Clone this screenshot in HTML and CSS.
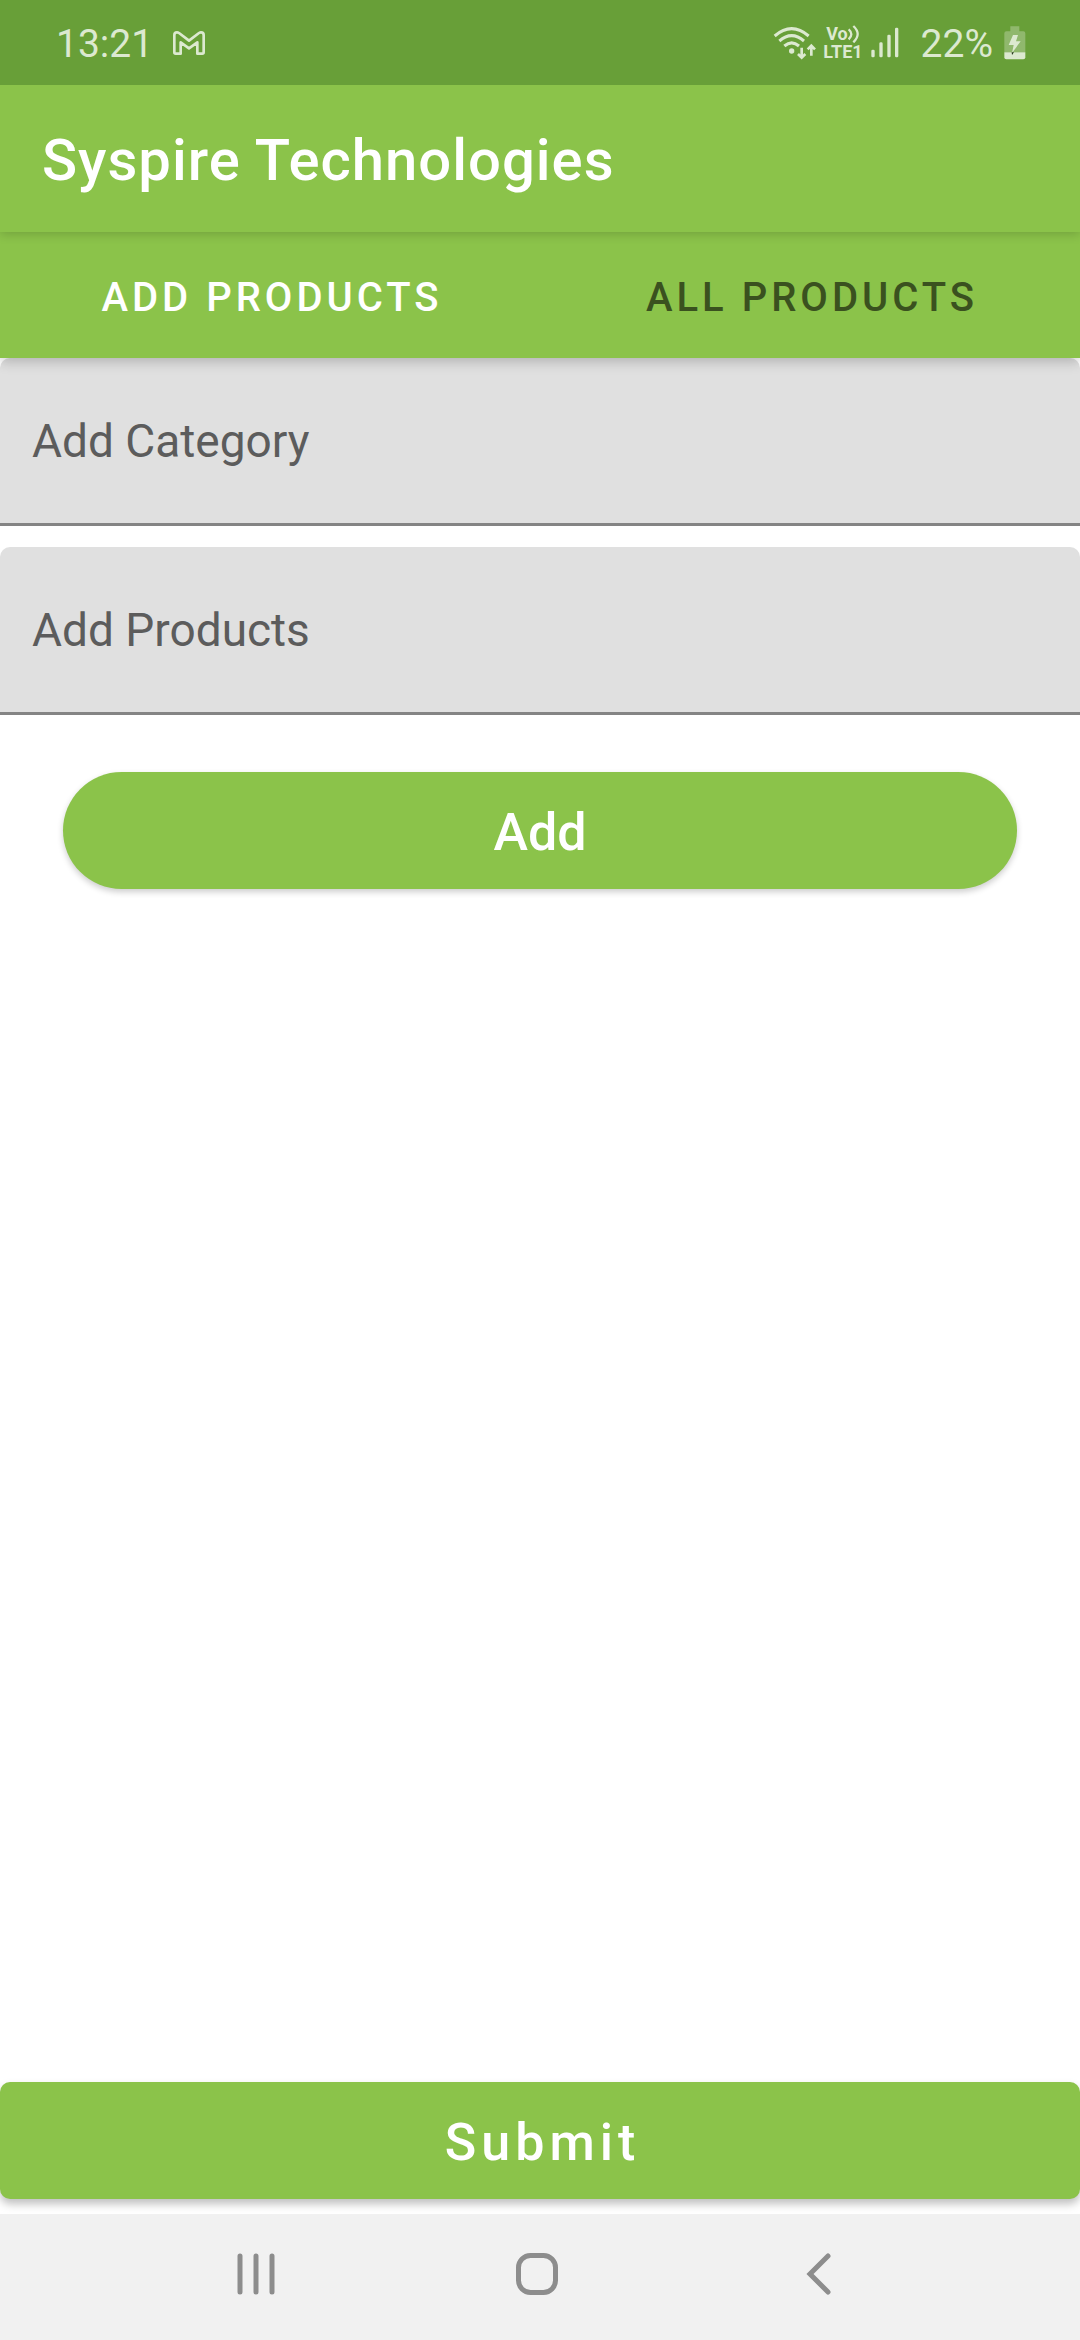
FILE: index.html
```html
<!DOCTYPE html>
<html lang="en">
<head>
<meta charset="utf-8">
<meta name="viewport" content="width=device-width, initial-scale=1">
<title>Syspire Technologies</title>
<link rel="stylesheet" href="styles.css">
</head>
<body>
<div class="app">
  <div class="status">
    <span class="clock">13:21</span>
    <svg class="mail" width="32" height="24" viewBox="0 0 96 72" aria-hidden="true">
      <path d="M4 64V12Q4 4 12 4Q15 4 18 6L48 29L78 6Q81 4 84 4Q92 4 92 12V64Q92 68 88 68H73V34L48 52L23 34V68H8Q4 68 4 64Z" fill="none" stroke="currentColor" stroke-width="8" stroke-linejoin="round"/>
    </svg>
    <div class="indicators">
      <svg width="44" height="34" viewBox="38 76 132 102" aria-hidden="true">
        <g fill="none" stroke="currentColor" stroke-width="9">
          <path d="M43 106Q94 62 145 106"/>
          <path d="M57 121Q94 89 131 121"/>
          <path d="M72 136Q94 117 116 136"/>
          <path d="M124 141V170M113 160L124 171L135 160" stroke-width="8"/>
          <path d="M153 165V136M142 146L153 135L164 146" stroke-width="8"/>
        </g>
        <circle cx="94" cy="151" r="8" fill="currentColor"/>
      </svg>
      <div class="volte">
        <span class="vo">Vo<svg width="12" height="18" viewBox="0 0 36 54" aria-hidden="true"><g fill="none" stroke="currentColor" stroke-width="7"><path d="M2 13Q18 27 2 43"/><path d="M16 3Q42 27 16 52"/></g></svg></span>
        <span>LTE1</span>
      </div>
      <svg class="signal" width="28" height="32" viewBox="332 84 84 96" aria-hidden="true">
        <g fill="currentColor"><rect x="333" y="152" width="10" height="23" rx="4"/><rect x="357" y="130" width="10" height="45" rx="4"/><rect x="381" y="107" width="10" height="68" rx="4"/><rect x="404" y="86" width="10" height="89" rx="4"/></g>
      </svg>
      <span class="percent">22%</span>
      <svg width="22" height="34" viewBox="731 77 66 102" aria-hidden="true">
        <path d="M750 78H777V93H789Q795 93 795 99V156H732V99Q732 93 738 93H750Z" fill="currentColor" opacity=".35"/>
        <path d="M732 156H795V171Q795 177 789 177H738Q732 177 732 171Z" fill="currentColor"/>
        <path d="M758 104H773L767 123H781L755 158L760 134H745Z" fill="currentColor"/>
        <path d="M754 156H761L755 164Z" fill="#23351a"/>
      </svg>
    </div>
  </div>
  <header class="bar"><h1>Syspire Technologies</h1></header>
  <nav class="tabs">
    <button class="tab active" type="button">ADD PRODUCTS</button>
    <button class="tab" type="button">ALL PRODUCTS</button>
  </nav>
  <form class="form">
    <input class="field" type="text" placeholder="Add Category" aria-label="Add Category">
    <input class="field" type="text" placeholder="Add Products" aria-label="Add Products">
    <button class="btn add" type="button">Add</button>
    <button class="btn submit" type="submit">Submit</button>
  </form>
  <nav class="system">
    <button type="button" aria-label="Recent apps"><svg width="42" height="42" viewBox="0 0 42 42"><path d="M5 3V39M21 3V39M37 3V39" fill="none" stroke="currentColor" stroke-width="5" stroke-linecap="round"/></svg></button>
    <button type="button" aria-label="Home"><svg width="42" height="42" viewBox="0 0 42 42"><rect x="2.5" y="2.5" width="37" height="37" rx="12" fill="none" stroke="currentColor" stroke-width="5"/></svg></button>
    <button type="button" aria-label="Back"><svg width="42" height="42" viewBox="0 0 42 42"><path d="M31 3L13 21L31 39" fill="none" stroke="currentColor" stroke-width="5" stroke-linecap="round"/></svg></button>
  </nav>
</div>
</body>
</html>
```
FILE: styles.css
```css
* {
  box-sizing: border-box;
}

body {
  margin: 0;
  background: #fff;
  font-family: Roboto, "Liberation Sans", sans-serif;
}

button,
input {
  margin: 0;
  border: 0;
  font-family: inherit;
}

button {
  padding: 0;
  background: none;
}

svg {
  display: block;
  flex: none;
}

.app {
  display: flex;
  flex-direction: column;
  min-height: 100vh;
}

.status {
  display: flex;
  align-items: center;
  height: 85px;
  padding: 0 54px 0 56px;
  background: #689f38;
  color: #dce9d0;
  font-size: 39px;
}

.clock,
.percent {
  padding-top: 3px;
}

.mail {
  margin-left: 20px;
}

.indicators {
  display: flex;
  align-items: center;
  margin-left: auto;
}

.volte {
  display: flex;
  flex-direction: column;
  align-items: center;
  margin: 0 8px 0 6px;
  font-size: 18px;
  font-weight: 700;
  line-height: 18px;
}

.vo {
  display: flex;
}

.percent {
  margin: 0 11px 0 22px;
}

.bar {
  position: relative;
  z-index: 2;
  display: flex;
  align-items: center;
  height: 147px;
  padding: 3px 42px 0;
  background: #8bc34a;
  box-shadow: 0 2px 10px rgba(0, 0, 0, 0.18);
  clip-path: inset(0 0 -20px 0);
}

.bar h1 {
  margin: 0;
  color: #fff;
  font-size: 58px;
  font-weight: 500;
  letter-spacing: 1px;
}

.tabs {
  position: relative;
  z-index: 1;
  display: grid;
  grid-template-columns: 1fr 1fr;
  height: 126px;
  background: #8bc34a;
  box-shadow: 0 4px 12px rgba(0, 0, 0, 0.2);
}

.tab {
  padding-top: 4px;
  color: #3a511f;
  font-size: 40px;
  font-weight: 500;
  letter-spacing: 4px;
  text-indent: 4px;
}

.tab.active {
  color: #fff;
}

.form {
  flex: 1;
  display: flex;
  flex-direction: column;
  padding-bottom: 15px;
}

.field {
  width: 100%;
  height: 168px;
  margin-bottom: 21px;
  padding: 0 32px;
  border-bottom: 3px solid #848484;
  border-radius: 10px 10px 0 0;
  background: #e0e0e0;
  color: #222;
  font-size: 46px;
}

.field::placeholder {
  color: #5c5c5c;
  opacity: 1;
}

.btn {
  height: 117px;
  padding-top: 3px;
  background: #8bc34a;
  color: #fff;
  font-size: 52px;
  font-weight: 500;
}

.add {
  margin: 36px 63px;
  border-radius: 59px;
  box-shadow: 0 3px 6px rgba(0, 0, 0, 0.2);
}

.submit {
  margin-top: auto;
  border-radius: 10px;
  box-shadow: 0 5px 8px rgba(0, 0, 0, 0.25);
  letter-spacing: 5px;
  text-indent: 5px;
}

.system {
  display: grid;
  grid-template-columns: repeat(3, 1fr);
  height: 126px;
  padding: 0 121px 6px 115px;
  background: #f1f1f1;
  color: #8d8d8d;
}

.system button {
  display: flex;
  align-items: center;
  justify-content: center;
  color: inherit;
}
```
